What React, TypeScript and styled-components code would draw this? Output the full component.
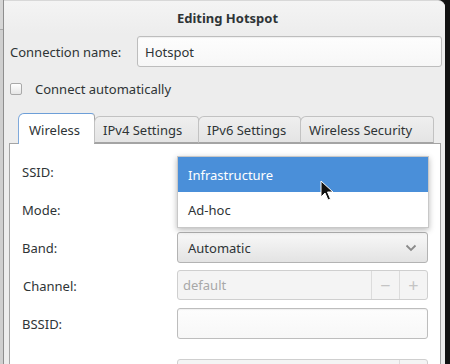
import React from "react";
import styled, { createGlobalStyle } from "styled-components";

const Global = createGlobalStyle`
  html, body { margin: 0; padding: 0; }
  body { background: #151515; font-family: "Noto Sans", "DejaVu Sans", sans-serif; font-size: 13px; color: #2e3436; }
  * { box-sizing: border-box; }
`;

const Screen = styled.div`
  display: flex;
  width: 450px;
  height: 364px;
  overflow: hidden;
`;

const BackWindow = styled.div`
  width: 4px;
  flex: none;
  background: linear-gradient(#d6d6d6 0 29px, #a8a8a8 29px 30px, #cfcfcf 30px);
  border-right: 1px solid #8e8e8e;
`;

const Dialog = styled.div`
  width: 441px;
  flex: none;
  height: 364px;
  overflow: hidden;
  background: #ededed;
  border-top-right-radius: 7px;
  border-top: 1px solid #d8d8d8;
  display: flex;
  flex-direction: column;
`;

const Desktop = styled.div`
  flex: 1;
  background: #121212;
`;

const TitleBar = styled.div`
  flex: none;
  height: 33px;
  display: flex;
  align-items: center;
  justify-content: center;
  padding-left: 6px;
  font-weight: bold;
  font-size: 13px;
  background: linear-gradient(#f4f4f4, #ededed);
`;

const NameRow = styled.div`
  flex: none;
  display: flex;
  align-items: center;
  padding: 2px 3px 0 6px;
`;

const NameLabel = styled.label`
  width: 127px;
  flex: none;
`;

const Entry = styled.div<{ $disabled?: boolean }>`
  flex: 1;
  height: 31px;
  display: flex;
  align-items: center;
  padding-left: ${(p) => (p.$disabled ? "5px" : "7px")};
  border: 1px solid ${(p) => (p.$disabled ? "#cfcfcf" : "#bdbdbd")};
  border-radius: 3px;
  background: ${(p) =>
    p.$disabled ? "#f4f4f4" : "linear-gradient(#fdfdfd, #f7f7f7)"};
  color: ${(p) => (p.$disabled ? "#a8a8a8" : "#2e3436")};
  box-shadow: ${(p) => (p.$disabled ? "none" : "inset 0 1px 1px rgba(0,0,0,0.06)")};
`;

const CheckRow = styled.div`
  flex: none;
  display: flex;
  align-items: center;
  gap: 13px;
  padding-left: 6px;
  margin-top: 16px;
  height: 12px;
`;

const CheckBox = styled.span`
  width: 12px;
  height: 12px;
  border: 1px solid #a9a9a9;
  border-radius: 2px;
  background: linear-gradient(#ffffff, #e6e6e6);
`;

const Notebook = styled.div`
  margin: 18px 4px 0 5px;
  flex: none;
  display: flex;
  flex-direction: column;
`;

const TabRow = styled.div`
  flex: none;
  display: flex;
  align-items: flex-end;
  height: 30px;
  padding-left: 9px;
  position: relative;
  z-index: 1;
`;

const Tab = styled.div<{ $active?: boolean; $w: number }>`
  width: ${(p) => p.$w}px;
  height: ${(p) => (p.$active ? "31px" : "27px")};
  margin-bottom: ${(p) => (p.$active ? "-1px" : "0")};
  display: flex;
  align-items: center;
  padding-left: ${(p) => (p.$active ? "10px" : "8px")};
  padding-top: ${(p) => (p.$active ? "2px" : "1px")};
  border: 1px solid ${(p) => (p.$active ? "#a4a4a4" : "#c2c2c2")};
  border-bottom: ${(p) => (p.$active ? "none" : "1px solid #a4a4a4")};
  border-top-color: ${(p) => (p.$active ? "#6d9fd8" : "#c2c2c2")};
  border-left-color: ${(p) => (p.$active ? "#7fa9db" : "#c2c2c2")};
  border-radius: 6px 4px 0 0;
  background: ${(p) => (p.$active ? "#ffffff" : "linear-gradient(#efefef, #e4e4e4)")};
  white-space: nowrap;
  & + & { margin-left: -1px; }
`;

const Panel = styled.div`
  background: #ffffff;
  border: 1px solid #a4a4a4;
  border-bottom: none;
  padding: 12px 12px 0 12px;
  height: 240px;
`;

const Form = styled.div`
  display: grid;
  grid-template-columns: 155px 1fr;
  grid-auto-rows: 31px;
  row-gap: 7px;
  align-items: center;
`;

const FieldLabel = styled.label<{ $shift?: number }>`
  padding-left: ${(p) => p.$shift ?? 0}px;
`;

const Cell = styled.div<{ $gap?: number }>`
  position: relative;
  display: flex;
  align-self: start;
  height: 31px;
  margin-top: ${(p) => p.$gap ?? 0}px;
`;

const Combo = styled.div`
  flex: 1;
  height: 31px;
  display: flex;
  align-items: center;
  justify-content: space-between;
  padding: 0 10px 0 10px;
  border: 1px solid #b3b3b3;
  border-radius: 3px;
  background: linear-gradient(#f8f8f8, #e3e3e3);
`;

const Spin = styled.div`
  flex: 1;
  height: 30px;
  display: flex;
  border: 1px solid #cfcfcf;
  border-radius: 3px;
  background: #f4f4f4;
  overflow: hidden;
`;

const SpinText = styled.div`
  flex: 1;
  display: flex;
  align-items: center;
  padding-left: 5px;
  color: #a8a8a8;
`;

const SpinButton = styled.div`
  width: 28px;
  display: flex;
  align-items: center;
  justify-content: center;
  border-left: 1px solid #dcdcdc;
  color: #c4c4c4;
  font-size: 18px;
`;

const Menu = styled.div`
  position: absolute;
  left: 0;
  top: 0;
  width: 252px;
  z-index: 2;
  background: #ffffff;
  border: 1px solid #c8c8c8;
  box-shadow: 0 2px 6px rgba(0, 0, 0, 0.28);
  display: flex;
  flex-direction: column;
`;

const MenuItem = styled.div<{ $selected?: boolean }>`
  height: 35px;
  display: flex;
  align-items: center;
  padding-left: 10px;
  background: ${(p) => (p.$selected ? "#4a8fd9" : "transparent")};
  color: ${(p) => (p.$selected ? "#ffffff" : "#2e3436")};
`;

const Pointer = styled.svg`
  position: absolute;
  left: 143px;
  top: 24px;
  z-index: 3;
`;

const Chevron = () => (
  <svg width="12" height="8" viewBox="0 0 12 8">
    <path d="M1.5 1.5 L6 6 L10.5 1.5" fill="none" stroke="#8a8a8a" strokeWidth="1.8" />
  </svg>
);

export default function App() {
  return (
    <>
      <Global />
      <Screen>
        <BackWindow />
        <Dialog>
          <TitleBar>Editing Hotspot</TitleBar>
          <NameRow>
            <NameLabel>Connection name:</NameLabel>
            <Entry>Hotspot</Entry>
          </NameRow>
          <CheckRow>
            <CheckBox />
            <span>Connect automatically</span>
          </CheckRow>
          <Notebook>
            <TabRow>
              <Tab $active $w={77}>Wireless</Tab>
              <Tab $w={105}>IPv4 Settings</Tab>
              <Tab $w={103}>IPv6 Settings</Tab>
              <Tab $w={134}>Wireless Security</Tab>
            </TabRow>
            <Panel>
              <Form>
                <FieldLabel>SSID:</FieldLabel>
                <Cell>
                  <Entry />
                  <Menu>
                    <MenuItem $selected>Infrastructure</MenuItem>
                    <MenuItem>Ad-hoc</MenuItem>
                  </Menu>
                  <Pointer width="14" height="22" viewBox="0 0 14 22">
                    <path
                      d="M1 1 L1 17 L5 13 L8 20 L10.5 19 L7.5 12 L13 12 Z"
                      fill="#111"
                      stroke="#fff"
                      strokeWidth="1"
                    />
                  </Pointer>
                </Cell>
                <FieldLabel>Mode:</FieldLabel>
                <Cell>
                  <Combo>
                    <span />
                    <Chevron />
                  </Combo>
                </Cell>
                <FieldLabel>Band:</FieldLabel>
                <Cell>
                  <Combo>
                    Automatic
                    <Chevron />
                  </Combo>
                </Cell>
                <FieldLabel $shift={1}>Channel:</FieldLabel>
                <Cell>
                  <Spin>
                    <SpinText>default</SpinText>
                    <SpinButton>−</SpinButton>
                    <SpinButton>+</SpinButton>
                  </Spin>
                </Cell>
                <FieldLabel>BSSID:</FieldLabel>
                <Cell>
                  <Entry />
                </Cell>
                <FieldLabel />
                <Cell $gap={13}>
                  <Spin>
                    <SpinText />
                    <SpinButton />
                  </Spin>
                </Cell>
              </Form>
            </Panel>
          </Notebook>
        </Dialog>
        <Desktop />
      </Screen>
    </>
  );
}
